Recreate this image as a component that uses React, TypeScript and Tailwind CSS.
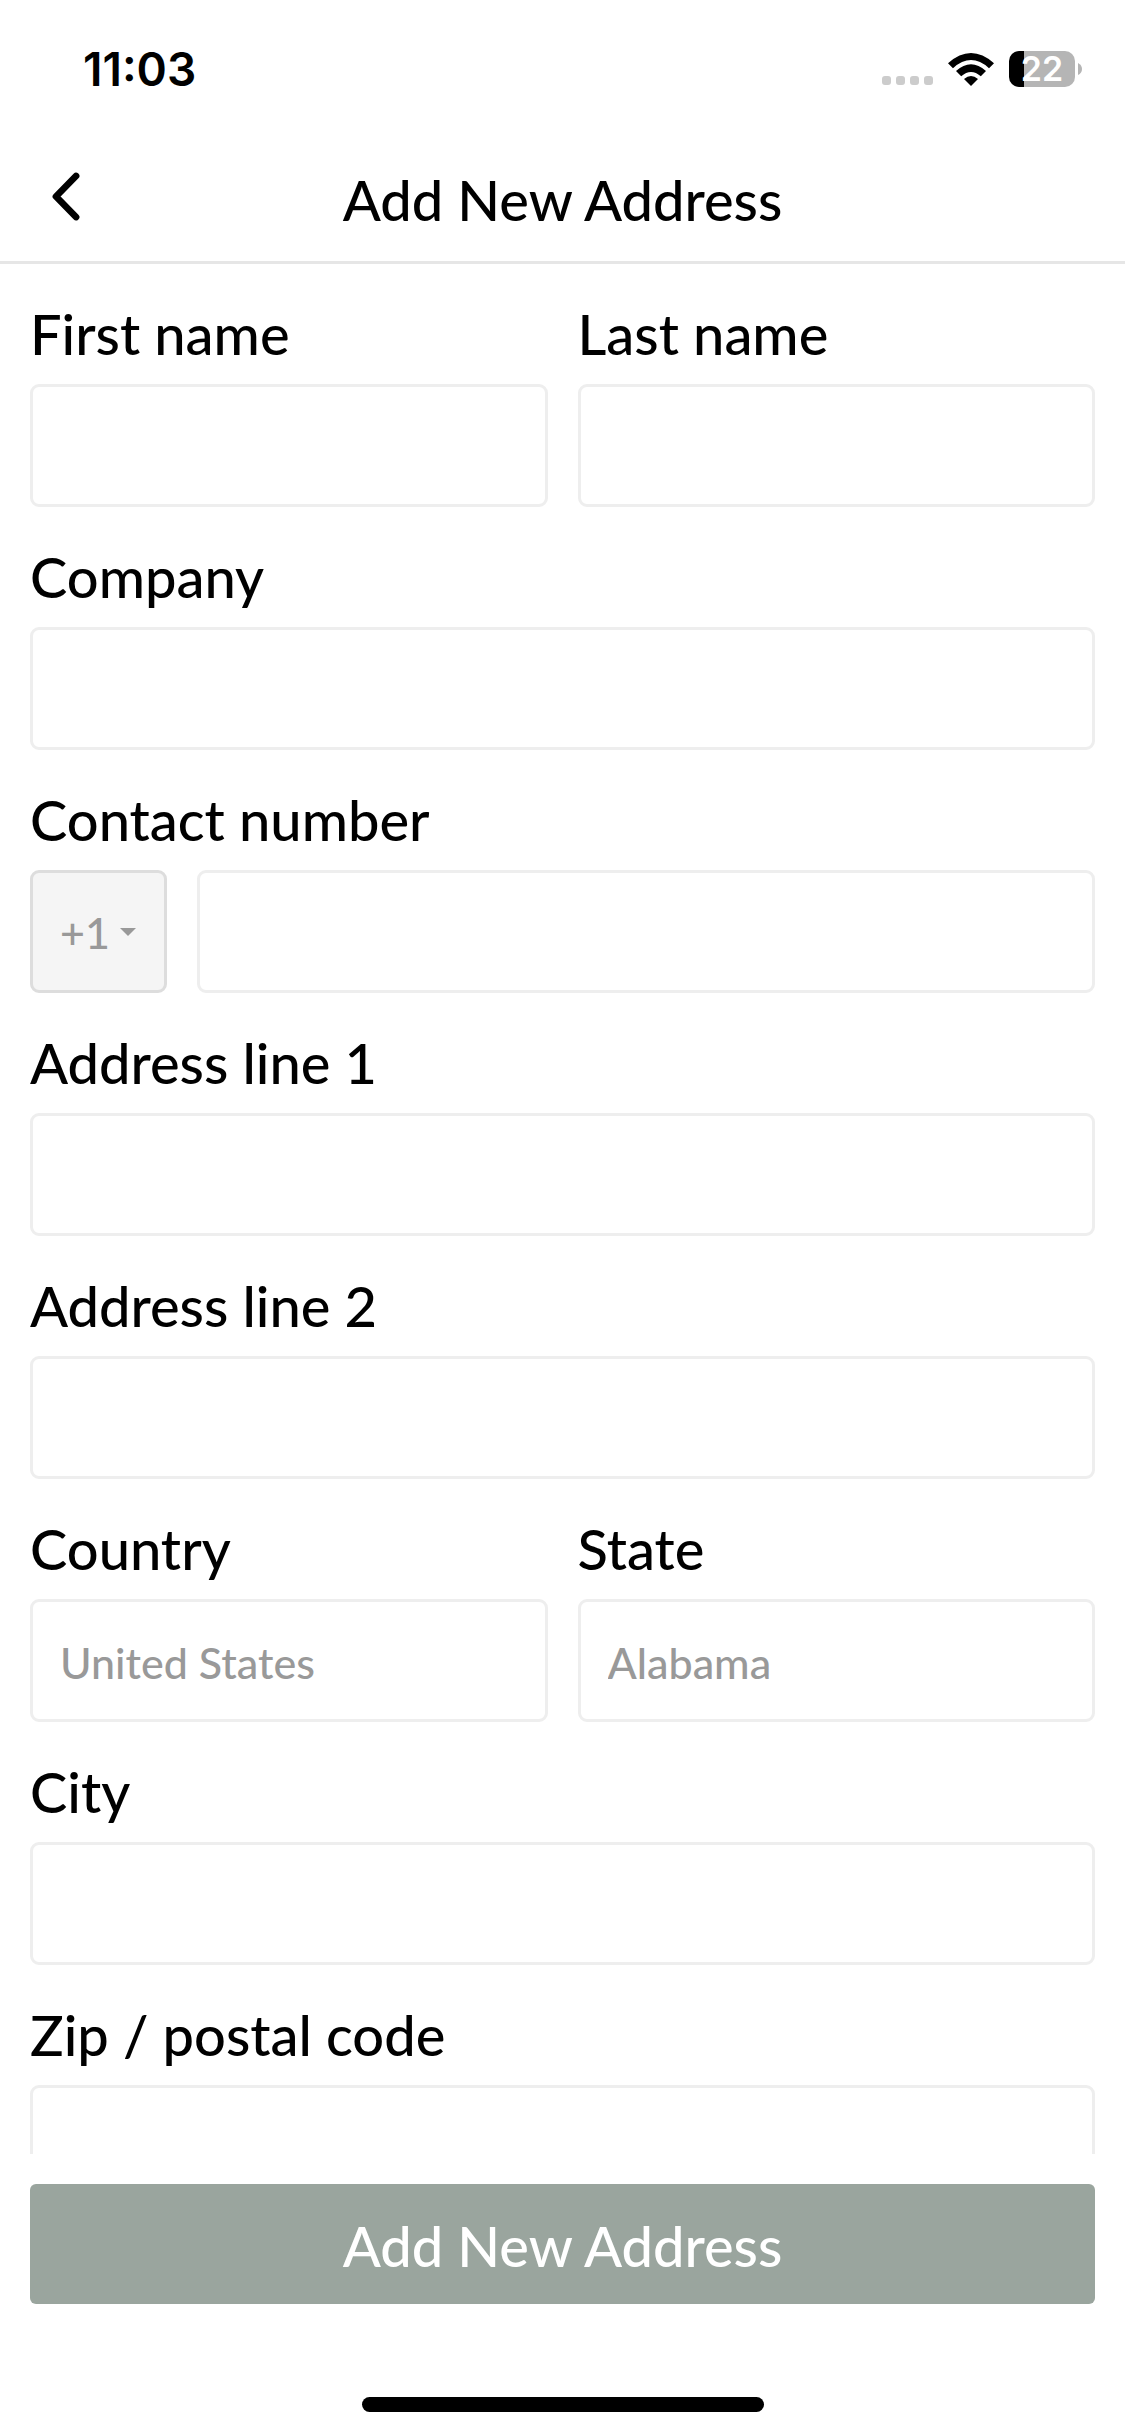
import type { InputHTMLAttributes } from "react";

const boxClass =
  "block h-[123px] w-full min-w-0 rounded-[9px] border-[3px] border-[#eeeeee] bg-white px-[27px] pt-1 text-[43px] font-medium text-[#222222] outline-none placeholder:text-[#999999] placeholder:opacity-100 focus:border-[#9aa59e]";

const labelClass = "block text-[56px] font-medium leading-[64px]";

type FieldProps = InputHTMLAttributes<HTMLInputElement> & { id: string; label: string };

function Field({ id, label, ...rest }: FieldProps) {
  return (
    <div className="flex min-w-0 flex-1 flex-col gap-[18px]">
      <label htmlFor={id} className={labelClass}>
        {label}
      </label>
      <input id={id} name={id} type="text" className={boxClass} {...rest} />
    </div>
  );
}

function WifiIcon() {
  return (
    <svg width="46" height="33" viewBox="0 0 46 33" aria-hidden="true">
      <path d="M0 10.2 Q23 -10.2 46 10.2 L41 15.2 Q23 -1 5 15.2 Z" />
      <path d="M8 18 Q23 4.4 38 18 L32.8 23.2 Q23 14.6 13.2 23.2 Z" />
      <path d="M16 26 Q23 20 30 26 L23 33 Z" />
    </svg>
  );
}

function Battery() {
  return (
    <div className="flex items-center gap-[3px]">
      <div className="flex h-9 w-[66px] items-center justify-center rounded-[10px] bg-[linear-gradient(to_right,#000_15px,#b5b5b5_15px)] font-[Inter,sans-serif] text-[34px] font-semibold leading-9 text-white">
        22
      </div>
      <svg width="4" height="12" viewBox="0 0 4 12" aria-hidden="true">
        <path d="M0 0 Q4 2 4 6 Q4 10 0 12 Z" fill="#b5b5b5" />
      </svg>
    </div>
  );
}

function StatusBar() {
  return (
    <div className="flex h-[132px] shrink-0 items-center justify-between pl-[83px] pr-[43px] pt-[6px]">
      <span className="font-[Inter,sans-serif] text-[46px] font-semibold leading-[54px]">11:03</span>
      <div className="flex items-center gap-[15px]">
        <div className="flex gap-[5px] pt-[23px]">
          {[0, 1, 2, 3].map((dot) => (
            <span key={dot} className="size-[9px] rounded-[3px] bg-[#cccccc]" />
          ))}
        </div>
        <WifiIcon />
        <Battery />
      </div>
    </div>
  );
}

export default function App() {
  return (
    <div className="flex h-screen flex-col bg-white font-[Lato,sans-serif] text-black">
      <StatusBar />

      <header className="grid h-[132px] shrink-0 grid-cols-[1fr_auto_1fr] items-center border-b-[3px] border-[#e6e6e6] px-[30px]">
        <button type="button" aria-label="Back" className="flex size-[72px] items-center pl-5">
          <svg width="32" height="50" viewBox="0 0 32 50" fill="none" aria-hidden="true">
            <path
              d="M26 4 L6 24.5 L26 45"
              stroke="#000"
              strokeWidth="6.8"
              strokeLinecap="round"
              strokeLinejoin="round"
            />
          </svg>
        </button>
        <h1 className="pt-[6px] text-[56px] font-medium leading-[64px]">Add New Address</h1>
      </header>

      <form
        id="address-form"
        className="flex min-h-0 flex-1 flex-col gap-[38px] overflow-hidden px-[30px] pt-[38px] *:shrink-0"
      >
        <div className="flex gap-[30px]">
          <Field id="first-name" label="First name" />
          <Field id="last-name" label="Last name" />
        </div>
        <div className="flex">
          <Field id="company" label="Company" />
        </div>
        <div className="flex flex-col gap-[18px]">
          <label htmlFor="phone" className={labelClass}>
            Contact number
          </label>
          <div className="flex gap-[30px]">
            <div className="relative w-[137px] shrink-0">
              <select
                aria-label="Country code"
                className="block h-[123px] w-full appearance-none rounded-[9px] border-[3px] border-[#dddddd] bg-[#f5f5f5] pl-[27px] pt-1 text-[43px] font-medium text-[#999999] outline-none"
              >
                <option>+1</option>
              </select>
              <svg
                width="16"
                height="8"
                viewBox="0 0 16 8"
                aria-hidden="true"
                className="pointer-events-none absolute right-[31px] top-[58px]"
              >
                <path d="M0 0 H16 L8 8 Z" fill="#999999" />
              </svg>
            </div>
            <input id="phone" name="phone" type="tel" className={boxClass} />
          </div>
        </div>
        <div className="flex">
          <Field id="address-1" label="Address line 1" />
        </div>
        <div className="flex">
          <Field id="address-2" label="Address line 2" />
        </div>
        <div className="flex gap-[30px]">
          <Field id="country" label="Country" placeholder="United States" />
          <Field id="state" label="State" placeholder="Alabama" />
        </div>
        <div className="flex">
          <Field id="city" label="City" />
        </div>
        <div className="flex">
          <Field id="zip" label="Zip / postal code" />
        </div>
      </form>

      <footer className="flex shrink-0 flex-col items-center px-[30px] pb-6 pt-[30px]">
        <button
          type="submit"
          form="address-form"
          className="h-[120px] w-full rounded-md bg-[#9aa59e] pt-1 text-[56px] font-medium leading-[64px] text-white"
        >
          Add New Address
        </button>
        <div className="mt-[93px] h-[15px] w-[402px] rounded-full bg-black" />
      </footer>
    </div>
  );
}
